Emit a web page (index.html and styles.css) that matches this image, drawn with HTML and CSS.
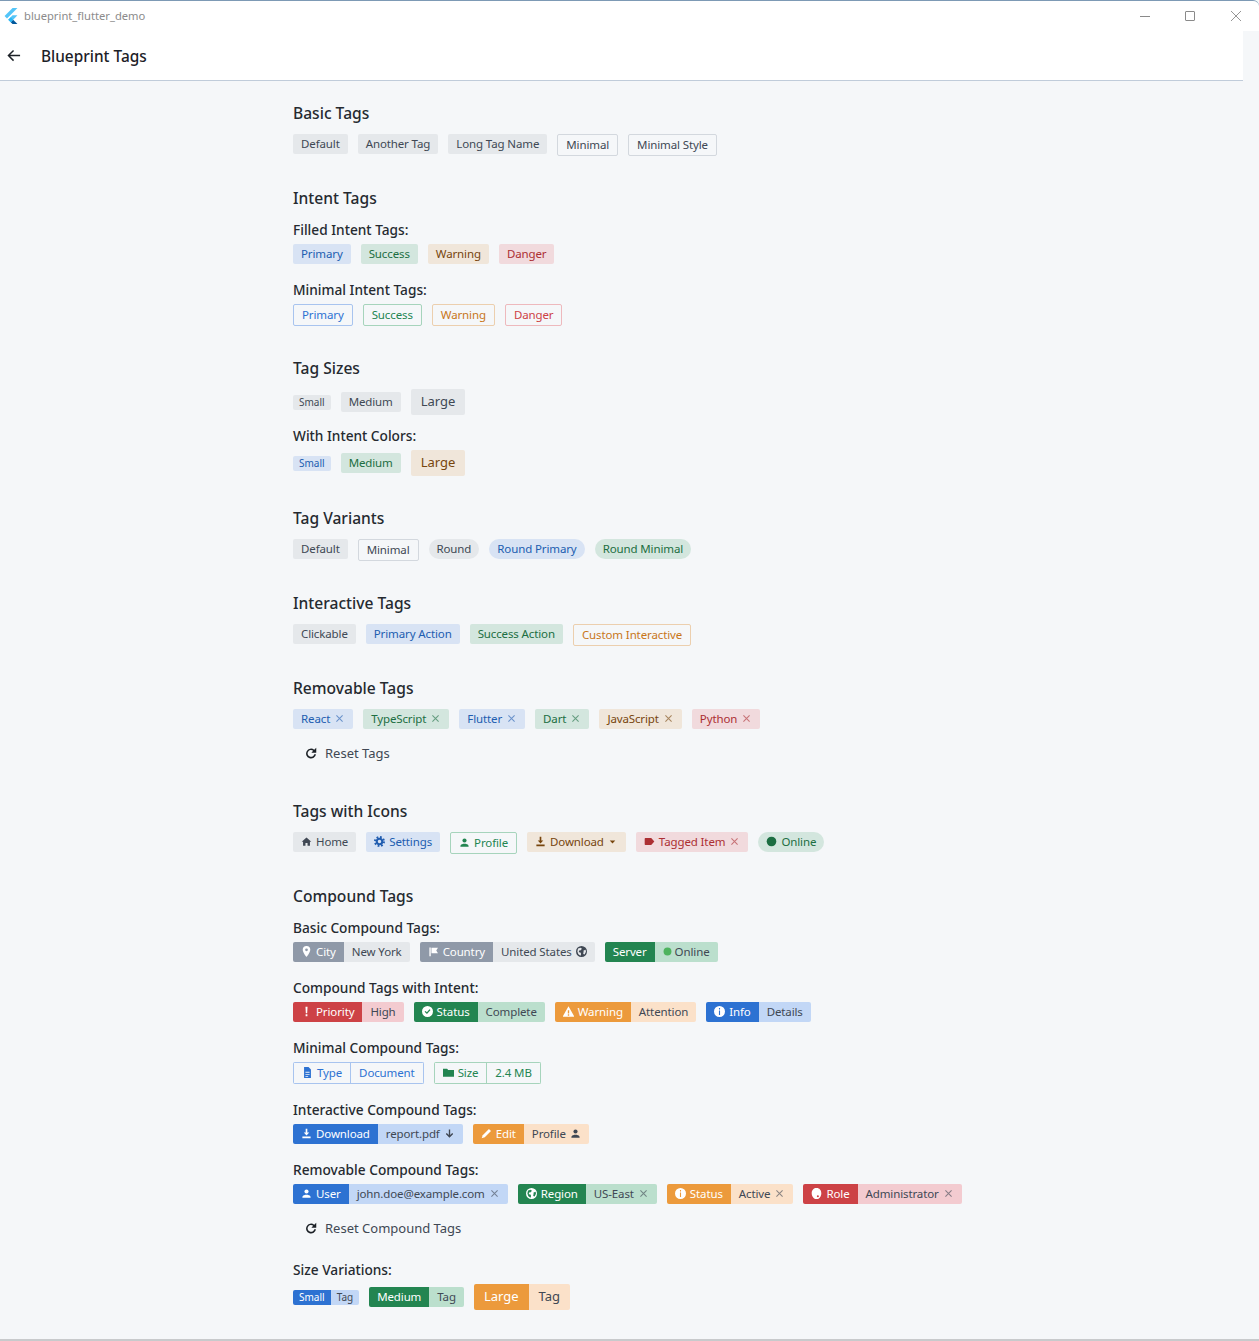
FILE: index.html
```html
<!DOCTYPE html>
<html lang="en">
  <head>
    <meta charset="utf-8" />
    <title>blueprint_flutter_demo</title>
    <link rel="stylesheet" href="styles.css">
  </head>
  <body>
    <svg class="sprite" width="0" height="0">
      <symbol id="i-home" viewBox="0 0 16 16"><path d="M8 2 1 8.500h2V14h3.500v-4h3v4H13V8.500h2z"/></symbol>
      <symbol id="i-cog" viewBox="0 0 16 16"><circle cx="8" cy="8" r="4" fill="none" stroke="currentColor" stroke-width="3"/><circle cx="8" cy="8" r="6.500" fill="none" stroke="currentColor" stroke-width="3" stroke-dasharray="2.550 2.550"/></symbol>
      <symbol id="i-person" viewBox="0 0 16 16"><circle cx="8" cy="5" r="3"/><path d="M2 14c0-2 .8-3 2.500-3.500C6 10 6.500 9.800 8 9.800s2 .2 3.500.7c1.700.5 2.500 1.500 2.500 3.500z"/></symbol>
      <symbol id="i-import" viewBox="0 0 16 16"><path d="M6.800 1h2.400v5.500H12L8 10.800 4 6.500h2.800zM2 12.500h12V15H2z"/></symbol>
      <symbol id="i-caret" viewBox="0 0 16 16"><path d="M4 6.500h8l-4 4.500z"/></symbol>
      <symbol id="i-tag" viewBox="0 0 16 16"><path d="M2 3h8.500L15 8l-4.500 5H2a1 1 0 0 1-1-1V4a1 1 0 0 1 1-1z"/></symbol>
      <symbol id="i-dot" viewBox="0 0 16 16"><circle cx="8" cy="8" r="7"/></symbol>
      <symbol id="i-marker" viewBox="0 0 16 16"><path fill-rule="evenodd" d="M8 0a5.500 5.500 0 0 0-5.500 5.500C2.500 9.500 8 16 8 16s5.500-6.500 5.500-10.500A5.500 5.500 0 0 0 8 0zm0 7.500a2 2 0 1 1 0-4 2 2 0 0 1 0 4z"/></symbol>
      <symbol id="i-flag" viewBox="0 0 16 16"><path d="M2 2h2v13H2zM5 2.500h9.500L12 6.500l2.500 4H5z"/></symbol>
      <symbol id="i-globe" viewBox="0 0 16 16"><path fill-rule="evenodd" d="M8 0a8 8 0 1 0 0 16A8 8 0 0 0 8 0zM3 3.500 7 2.500l1.500 1.500L7 6 4.500 6.500 4 9l2.500.5 1 2-1 2.500L3.500 12 2 8zm8 3 3-1 .5 3-2 4-2-1 .5-3z"/></symbol>
      <symbol id="i-excl" viewBox="0 0 16 16"><path d="M6.500 1h3l-.5 9.500H7zM6.700 12h2.600v3H6.700z"/></symbol>
      <symbol id="i-tick" viewBox="0 0 16 16"><path fill-rule="evenodd" d="M8 0a8 8 0 1 0 0 16A8 8 0 0 0 8 0zm-.8 11.800L3.700 8.500l1.400-1.400 2 1.900 3.800-4.400 1.500 1.300z"/></symbol>
      <symbol id="i-warn" viewBox="0 0 16 16"><path fill-rule="evenodd" d="M8 .5-.5 15.500h17zM7 6h2v5H7zm0 6h2v2H7z"/></symbol>
      <symbol id="i-info" viewBox="0 0 16 16"><path fill-rule="evenodd" d="M8 0a8 8 0 1 0 0 16A8 8 0 0 0 8 0zM7.200 3h1.600v2H7.200zm0 3.500h1.600V13H7.200z"/></symbol>
      <symbol id="i-doc" viewBox="0 0 16 16"><path fill-rule="evenodd" d="M3 0h6.500L13 3.500V16H3zM5 7v1.300h6V7zm0 3v1.300h6V10zm0 3v1.300h4V13z"/></symbol>
      <symbol id="i-folder" viewBox="0 0 16 16"><path d="M0 2.500h6l1.500 2H16V14H0z"/></symbol>
      <symbol id="i-down" viewBox="0 0 16 16"><path d="M7 2h2v8.200l3-3 1.400 1.400L8 14 2.600 8.600 4 7.200l3 3z"/></symbol>
      <symbol id="i-edit" viewBox="0 0 16 16"><path d="M11.500 1.500 14.500 4.500 5.500 13.500 1 15l1.500-4.500z"/></symbol>
      <symbol id="i-shield" viewBox="0 0 16 16"><path fill-rule="evenodd" d="M8 0c2.500 0 4 1 5 2 1.500 1.500 2 3.500 2 6 0 3-1.500 6-4 7.500-1 .5-2 .5-3 .5-2.500 0-3.500-1-4.500-2C2 12.500 1 10 1 7.500 1 3 4 0 8 0zm2 10.500a1.500 1.500 0 1 0 0 3 1.500 1.500 0 0 0 0-3z"/></symbol>
      <symbol id="i-refresh" viewBox="0 0 16 16"><path d="M15 1v6.500H8.500l2.400-2.400A4.500 4.500 0 1 0 12.400 9.500h2.200A6.600 6.600 0 1 1 12.300 3.700z"/></symbol>
      <symbol id="i-back" viewBox="0 0 16 16"><path d="M7.500 2 8.600 3.100 4.500 7.200H15v1.600H4.500l4.100 4.100L7.500 14 1.500 8z"/></symbol>
      <symbol id="i-x" viewBox="0 0 16 16"><path d="M3.500 3.500l9 9m0-9-9 9" fill="none" stroke="currentColor" stroke-width="1.500"/></symbol>
    </svg>

    <header class="titlebar">
      <svg class="titlebar__logo" viewBox="0 0 24 24">
        <path fill="#54c5f8" d="M14.300 0 2.300 12 6 15.700 21.700 0z"/>
        <path fill="#54c5f8" d="M21.700 11h-7.400L7.900 17.500l3.700 3.700z"/>
        <path fill="#01579b" d="M11.600 21.200 14.300 24h7.400l-6.500-6.500z"/>
        <path fill="#29b6f6" d="M7.900 17.500l3.700-3.700 3.600 3.700-3.600 3.700z"/>
      </svg>
      <span class="titlebar__title">blueprint_flutter_demo</span>
      <span class="winctl winctl--min"></span>
      <span class="winctl winctl--max"></span>
      <svg class="winctl winctl--close" viewBox="0 0 10 10"><path d="M0 0l10 10m0-10L0 10" stroke="#8a8a8a" stroke-width=".9"/></svg>
    </header>

    <div class="window">
      <div class="pane">
        <div class="appbar">
          <svg class="appbar__back"><use href="#i-back"/></svg>
          <span class="appbar__title">Blueprint Tags</span>
        </div>
        <main class="content">

          <section class="section">
            <h2>Basic Tags</h2>
            <div class="row">
              <span class="tag">Default</span>
              <span class="tag">Another Tag</span>
              <span class="tag">Long Tag Name</span>
              <span class="tag tag--minimal">Minimal</span>
              <span class="tag tag--minimal">Minimal Style</span>
            </div>
          </section>

          <section class="section">
            <h2>Intent Tags</h2>
            <div class="group group--first">
              <h3>Filled Intent Tags:</h3>
              <div class="row">
                <span class="tag tag--primary">Primary</span>
                <span class="tag tag--success">Success</span>
                <span class="tag tag--warning">Warning</span>
                <span class="tag tag--danger">Danger</span>
              </div>
            </div>
            <div class="group">
              <h3>Minimal Intent Tags:</h3>
              <div class="row">
                <span class="tag tag--minimal tag--primary">Primary</span>
                <span class="tag tag--minimal tag--success">Success</span>
                <span class="tag tag--minimal tag--warning">Warning</span>
                <span class="tag tag--minimal tag--danger">Danger</span>
              </div>
            </div>
          </section>

          <section class="section">
            <h2>Tag Sizes</h2>
            <div class="row row--center row--sizes">
              <span class="tag tag--small">Small</span>
              <span class="tag">Medium</span>
              <span class="tag tag--large">Large</span>
            </div>
            <div class="group group--sizes">
              <h3>With Intent Colors:</h3>
              <div class="row row--center">
                <span class="tag tag--small tag--primary">Small</span>
                <span class="tag tag--success">Medium</span>
                <span class="tag tag--large tag--warning">Large</span>
              </div>
            </div>
          </section>

          <section class="section">
            <h2>Tag Variants</h2>
            <div class="row">
              <span class="tag">Default</span>
              <span class="tag tag--minimal">Minimal</span>
              <span class="tag tag--round">Round</span>
              <span class="tag tag--round tag--primary">Round Primary</span>
              <span class="tag tag--round tag--success">Round Minimal</span>
            </div>
          </section>

          <section class="section">
            <h2>Interactive Tags</h2>
            <div class="row">
              <span class="tag">Clickable</span>
              <span class="tag tag--primary">Primary Action</span>
              <span class="tag tag--success">Success Action</span>
              <span class="tag tag--minimal tag--warning">Custom Interactive</span>
            </div>
          </section>

          <section class="section">
            <h2>Removable Tags</h2>
            <div class="row">
              <span class="tag tag--primary">React<svg class="x"><use href="#i-x"/></svg></span>
              <span class="tag tag--success">TypeScript<svg class="x"><use href="#i-x"/></svg></span>
              <span class="tag tag--primary">Flutter<svg class="x"><use href="#i-x"/></svg></span>
              <span class="tag tag--success">Dart<svg class="x"><use href="#i-x"/></svg></span>
              <span class="tag tag--warning">JavaScript<svg class="x"><use href="#i-x"/></svg></span>
              <span class="tag tag--danger">Python<svg class="x"><use href="#i-x"/></svg></span>
            </div>
            <button class="reset"><svg class="reset__icon"><use href="#i-refresh"/></svg>Reset Tags</button>
          </section>

          <section class="section">
            <h2>Tags with Icons</h2>
            <div class="row">
              <span class="tag"><svg class="icon"><use href="#i-home"/></svg>Home</span>
              <span class="tag tag--primary"><svg class="icon"><use href="#i-cog"/></svg>Settings</span>
              <span class="tag tag--minimal tag--success"><svg class="icon"><use href="#i-person"/></svg>Profile</span>
              <span class="tag tag--warning"><svg class="icon"><use href="#i-import"/></svg>Download<svg class="icon icon--after icon--caret"><use href="#i-caret"/></svg></span>
              <span class="tag tag--danger"><svg class="icon"><use href="#i-tag"/></svg>Tagged Item<svg class="x"><use href="#i-x"/></svg></span>
              <span class="tag tag--round tag--success"><svg class="icon"><use href="#i-dot"/></svg>Online</span>
            </div>
          </section>

          <section class="section">
            <h2>Compound Tags</h2>
            <div class="group group--first">
              <h3>Basic Compound Tags:</h3>
              <div class="row">
                <span class="cmp"><span class="cmp__l"><svg class="icon"><use href="#i-marker"/></svg>City</span><span class="cmp__r">New York</span></span>
                <span class="cmp"><span class="cmp__l"><svg class="icon"><use href="#i-flag"/></svg>Country</span><span class="cmp__r">United States<svg class="icon icon--after"><use href="#i-globe"/></svg></span></span>
                <span class="cmp cmp--success"><span class="cmp__l">Server</span><span class="cmp__r"><svg class="icon icon--online"><use href="#i-dot"/></svg>Online</span></span>
              </div>
            </div>
            <div class="group">
              <h3>Compound Tags with Intent:</h3>
              <div class="row">
                <span class="cmp cmp--danger"><span class="cmp__l"><svg class="icon"><use href="#i-excl"/></svg>Priority</span><span class="cmp__r">High</span></span>
                <span class="cmp cmp--success"><span class="cmp__l"><svg class="icon"><use href="#i-tick"/></svg>Status</span><span class="cmp__r">Complete</span></span>
                <span class="cmp cmp--warning"><span class="cmp__l"><svg class="icon"><use href="#i-warn"/></svg>Warning</span><span class="cmp__r">Attention</span></span>
                <span class="cmp cmp--primary"><span class="cmp__l"><svg class="icon"><use href="#i-info"/></svg>Info</span><span class="cmp__r">Details</span></span>
              </div>
            </div>
            <div class="group">
              <h3>Minimal Compound Tags:</h3>
              <div class="row">
                <span class="cmp cmp--minimal cmp--primary"><span class="cmp__l"><svg class="icon"><use href="#i-doc"/></svg>Type</span><span class="cmp__r">Document</span></span>
                <span class="cmp cmp--minimal cmp--success"><span class="cmp__l"><svg class="icon"><use href="#i-folder"/></svg>Size</span><span class="cmp__r">2.4 MB</span></span>
              </div>
            </div>
            <div class="group">
              <h3>Interactive Compound Tags:</h3>
              <div class="row">
                <span class="cmp cmp--primary"><span class="cmp__l"><svg class="icon"><use href="#i-import"/></svg>Download</span><span class="cmp__r">report.pdf<svg class="icon icon--after"><use href="#i-down"/></svg></span></span>
                <span class="cmp cmp--warning"><span class="cmp__l"><svg class="icon"><use href="#i-edit"/></svg>Edit</span><span class="cmp__r">Profile<svg class="icon icon--after"><use href="#i-person"/></svg></span></span>
              </div>
            </div>
            <div class="group">
              <h3>Removable Compound Tags:</h3>
              <div class="row">
                <span class="cmp cmp--primary"><span class="cmp__l"><svg class="icon"><use href="#i-person"/></svg>User</span><span class="cmp__r">john.doe@example.com<svg class="x"><use href="#i-x"/></svg></span></span>
                <span class="cmp cmp--success"><span class="cmp__l"><svg class="icon"><use href="#i-globe"/></svg>Region</span><span class="cmp__r">US-East<svg class="x"><use href="#i-x"/></svg></span></span>
                <span class="cmp cmp--warning"><span class="cmp__l"><svg class="icon"><use href="#i-info"/></svg>Status</span><span class="cmp__r">Active<svg class="x"><use href="#i-x"/></svg></span></span>
                <span class="cmp cmp--danger"><span class="cmp__l"><svg class="icon"><use href="#i-shield"/></svg>Role</span><span class="cmp__r">Administrator<svg class="x"><use href="#i-x"/></svg></span></span>
              </div>
              <button class="reset"><svg class="reset__icon"><use href="#i-refresh"/></svg>Reset Compound Tags</button>
            </div>
            <div class="group">
              <h3>Size Variations:</h3>
              <div class="row row--center">
                <span class="cmp cmp--primary cmp--small"><span class="cmp__l">Small</span><span class="cmp__r">Tag</span></span>
                <span class="cmp cmp--success"><span class="cmp__l">Medium</span><span class="cmp__r">Tag</span></span>
                <span class="cmp cmp--warning cmp--large"><span class="cmp__l">Large</span><span class="cmp__r">Tag</span></span>
              </div>
            </div>
          </section>

        </main>
      </div>
    </div>
  </body>
</html>
```

FILE: styles.css
```css
html,
body {
  margin: 0;
  height: 100%;
}
body {
  display: flex;
  flex-direction: column;
  height: 1341px;
  overflow: hidden;
  font-family: "Noto Sans", sans-serif;
  color: #1c2127;
  background-color: #f5f7f9;
}
.sprite {
  position: absolute;
}
svg {
  fill: currentColor;
}

.titlebar {
  display: flex;
  align-items: center;
  flex: none;
  height: 30px;
  background-color: #fff;
  border-top: 1px solid #7d9ab5;
  border-top-right-radius: 6px;
}
.titlebar__logo {
  width: 16px;
  height: 16px;
  margin-left: 3px;
}
.titlebar__title {
  flex: 1;
  margin-left: 5px;
  padding-bottom: 2px;
  font-size: 11.200px;
  color: #8b8b8b;
}
.winctl {
  display: block;
  flex: none;
}
.winctl--min {
  width: 10px;
  height: 1px;
  background-color: #8a8a8a;
  margin-right: 35px;
}
.winctl--max {
  box-sizing: border-box;
  width: 10px;
  height: 10px;
  border: 1px solid #8a8a8a;
  border-radius: 1px;
  margin-right: 36px;
}
.winctl--close {
  width: 10px;
  height: 10px;
  margin-right: 18px;
}

.window {
  flex: 1;
  min-height: 0;
  border-bottom: 2px solid #c8cacc;
}
.pane {
  box-sizing: border-box;
  width: 1243px;
  height: 100%;
}
.appbar {
  box-sizing: border-box;
  display: flex;
  align-items: center;
  height: 50px;
  padding-left: 6px;
  background-color: #fff;
  border-bottom: 1px solid #c0ccda;
}
.appbar__back {
  width: 15px;
  height: 15px;
}
.appbar__title {
  margin-left: 20px;
  padding-top: 2px;
  font-size: 15.400px;
  font-weight: 500;
}

.content {
  box-sizing: border-box;
  width: 800px;
  margin-left: 293px;
  padding-top: 20px;
}
.section {
  margin-bottom: 30px;
}
h2 {
  margin: 0 0 9px;
  font-size: 15.600px;
  line-height: 24px;
  font-weight: 500;
  color: #252a30;
}
h3 {
  margin: 0 0 5px;
  font-size: 13.700px;
  line-height: 18px;
  font-weight: 500;
  color: #252a30;
}
.group {
  margin-top: 17px;
}
.group--first {
  margin-top: 11px;
}
.group--sizes {
  margin-top: 12px;
}
.row {
  display: flex;
  flex-wrap: wrap;
  align-items: flex-start;
  gap: 10px;
}
.row--center {
  align-items: center;
}

.tag {
  display: inline-flex;
  align-items: center;
  box-sizing: border-box;
  height: 20px;
  padding: 0 8px 1px;
  font-size: 11.500px;
  letter-spacing: -0.12px;
  white-space: nowrap;
  border-radius: 2px;
  color: #404854;
  background-color: #e5e8eb;
}
.tag--primary {
  color: #215db0;
  background-color: #d8e3f4;
}
.tag--success {
  color: #1c6e42;
  background-color: #d3e6de;
}
.tag--warning {
  color: #77450d;
  background-color: #f0e6da;
}
.tag--danger {
  color: #ac2f33;
  background-color: #f1dadd;
}
.tag--round {
  border-radius: 10px;
}
.tag--small {
  height: 15px;
  padding: 0 6px;
  font-size: 10px;
  letter-spacing: 0;
}
.tag--large {
  height: 26px;
  padding: 0 10px 2px;
  font-size: 13px;
  letter-spacing: 0;
}
.tag--minimal {
  height: 22px;
  padding: 0 8px 1px;
  background-color: transparent;
  border: 1px solid #d3d8de;
}
.tag--minimal.tag--primary {
  color: #2d72d2;
  background-color: transparent;
  border-color: #a8c4ef;
}
.tag--minimal.tag--success {
  color: #238551;
  background-color: transparent;
  border-color: #a6d4bc;
}
.tag--minimal.tag--warning {
  color: #c87619;
  background-color: transparent;
  border-color: #eccfae;
}
.tag--minimal.tag--danger {
  color: #cd4246;
  background-color: transparent;
  border-color: #eeb9bd;
}

.icon {
  flex: none;
  width: 11px;
  height: 11px;
  margin-right: 4px;
}
.icon--after {
  margin-right: 0;
  margin-left: 4px;
}
.icon--caret {
  margin-left: 3px;
}
.icon--online {
  width: 9px;
  height: 9px;
  margin-right: 3px;
  color: #4db35e;
}
.x {
  flex: none;
  width: 11px;
  height: 11px;
  margin-left: 4px;
  opacity: 0.6;
}

.cmp {
  display: inline-flex;
  height: 20px;
  font-size: 11.500px;
  letter-spacing: -0.12px;
  white-space: nowrap;
  border-radius: 2px;
  overflow: hidden;
}
.cmp__l,
.cmp__r {
  display: inline-flex;
  align-items: center;
  padding: 0 8px 1px;
}
.cmp__l {
  color: #fff;
  background-color: #8f99a8;
}
.cmp__r {
  color: #404854;
  background-color: #e5e8eb;
}
.cmp--primary .cmp__l {
  background-color: #2d72d2;
}
.cmp--primary .cmp__r {
  background-color: #c2d7f6;
}
.cmp--success .cmp__l {
  background-color: #238551;
}
.cmp--success .cmp__r {
  background-color: #bbdfcd;
}
.cmp--warning .cmp__l {
  background-color: #ec9a3c;
}
.cmp--warning .cmp__r {
  background-color: #fbe1c9;
}
.cmp--danger .cmp__l {
  background-color: #cd4246;
}
.cmp--danger .cmp__r {
  background-color: #f3cbd0;
}
.cmp--small {
  height: 15px;
  font-size: 10px;
  letter-spacing: 0;
}
.cmp--small .cmp__l,
.cmp--small .cmp__r {
  padding: 0 6px;
}
.cmp--large {
  height: 26px;
  font-size: 13px;
  letter-spacing: 0;
}
.cmp--large .cmp__l,
.cmp--large .cmp__r {
  padding: 0 10px 2px;
}
.cmp--minimal {
  box-sizing: border-box;
  height: 22px;
}
.cmp--minimal .cmp__l,
.cmp--minimal .cmp__r {
  background-color: transparent;
  border: 1px solid;
}
.cmp--minimal .cmp__r {
  border-left: 0;
}
.cmp--minimal.cmp--primary .cmp__l,
.cmp--minimal.cmp--primary .cmp__r {
  color: #2d72d2;
  border-color: #a8c4ef;
}
.cmp--minimal.cmp--success .cmp__l,
.cmp--minimal.cmp--success .cmp__r {
  color: #238551;
  border-color: #a6d4bc;
}

.reset {
  display: flex;
  align-items: center;
  height: 32px;
  margin-top: 8px;
  padding: 0 12px;
  border: 0;
  font-family: inherit;
  font-size: 13px;
  color: #404854;
  background: transparent;
}
.reset__icon {
  width: 12px;
  height: 12px;
  margin-right: 8px;
  color: #1c2127;
}
```
